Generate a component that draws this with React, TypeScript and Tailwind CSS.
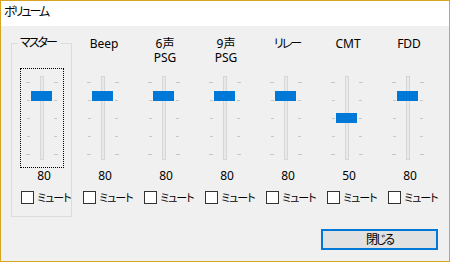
import React from "react"

interface Channel {
  label: string[]
  value: number
}

const CHANNELS: Channel[] = [
  { label: ["Beep"], value: 80 },
  { label: ["6声", "PSG"], value: 80 },
  { label: ["9声", "PSG"], value: 80 },
  { label: ["リレー"], value: 80 },
  { label: ["CMT"], value: 50 },
  { label: ["FDD"], value: 80 },
]

const TICKS = [13, 31, 49, 67, 85]

function Slider({ value, focused }: { value: number; focused?: boolean }) {
  const thumbTop = Math.round(7.5 + (100 - value) * 0.7333)
  return (
    <div
      className={`relative w-[44px] h-[100px] border ${
        focused ? "border-dotted border-black" : "border-transparent"
      }`}
    >
      <div className="absolute left-[19px] top-[7px] w-[4px] h-[84px] border border-[#d6d6d6] bg-[#e7eaea]" />
      {TICKS.map((y, i) => {
        const end = i === 0 || i === TICKS.length - 1
        return (
          <React.Fragment key={y}>
            <div
              className={`absolute h-px bg-[#c8c8c8] ${end ? "left-[5px] w-[4px]" : "left-[6px] w-[3px]"}`}
              style={{ top: y }}
            />
            <div
              className={`absolute h-px bg-[#c8c8c8] left-[33px] ${end ? "w-[4px]" : "w-[3px]"}`}
              style={{ top: y }}
            />
          </React.Fragment>
        )
      })}
      <div className="absolute left-[10px] w-[21px] h-[10px] bg-[#0078d7]" style={{ top: thumbTop }} />
    </div>
  )
}

function Mute() {
  return (
    <div className="flex items-center h-[13px] gap-[3px] whitespace-nowrap">
      <div className="shrink-0 w-[13px] h-[13px] border border-[#333333] bg-white" />
      <span className="leading-[13px] text-[11px] tracking-[-1px]">ミュート</span>
    </div>
  )
}

function Column({ channel }: { channel: Channel }) {
  return (
    <div className="w-[61px] shrink-0 flex flex-col">
      <div className="h-[32px] pt-[1px] pl-[3px] text-center leading-[14px]">
        {channel.label.map((l) => (
          <div key={l} className={`h-[14px] ${l === "リレー" ? "tracking-[-2px]" : ""}`}>
            {l}
          </div>
        ))}
      </div>
      <div className="ml-[9px]">
        <Slider value={channel.value} />
      </div>
      <div className="ml-[11px] w-[44px] mt-[1px] text-center leading-[14px]">{channel.value}</div>
      <div className="ml-[11px] mt-[8px]">
        <Mute />
      </div>
    </div>
  )
}

export default function App() {
  return (
    <div className="w-[450px] h-[262px] border border-[#d9a422] bg-[#f0f0f0] flex flex-col text-[12px] text-black font-['Noto_Sans','Noto_Sans_CJK_JP',sans-serif] [font-feature-settings:'palt']">
      <div className="h-[25px] bg-white pl-[3px] pt-[4px] leading-[14px] tracking-[-2px]">ボリューム</div>

      <div className="flex pl-[10px] pt-[10px]">
        <div className="relative shrink-0 w-[61px] h-[174px] mt-[7px] border border-[#dcdcdc] flex flex-col pt-[24px]">
          <span className="absolute left-[6px] top-[-8px] pl-[2px] pr-[4px] bg-[#f0f0f0] leading-[14px] whitespace-nowrap tracking-[-2px]">
            マスター
          </span>
          <div className="ml-[8px]">
            <Slider value={80} focused />
          </div>
          <div className="ml-[10px] w-[44px] mt-[1px] text-center leading-[14px]">80</div>
          <div className="ml-[9px] mt-[8px]">
            <Mute />
          </div>
        </div>
        {CHANNELS.map((c) => (
          <Column key={c.label.join("")} channel={c} />
        ))}
      </div>

      <div className="flex justify-end pr-[11px] mt-[12px]">
        <button className="w-[117px] h-[21px] border-2 border-[#0078d7] bg-[#e1e1e1] leading-[14px] tracking-[-2px]">
          閉じる
        </button>
      </div>
    </div>
  )
}
